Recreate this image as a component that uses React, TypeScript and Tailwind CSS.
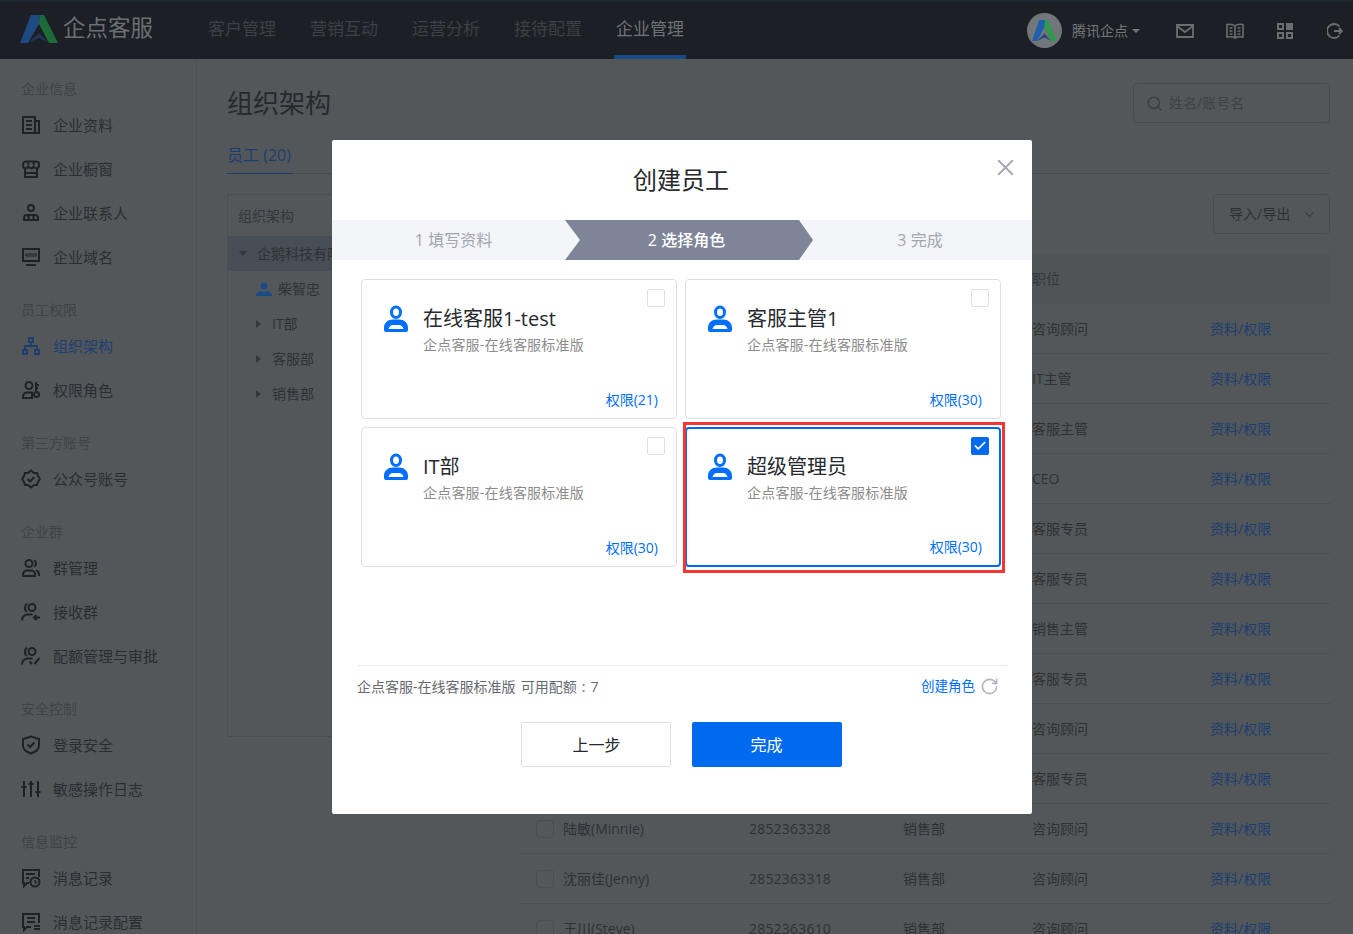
import { ReactNode } from "react";
import { Check, ChevronDown, RotateCw, Search, X } from "lucide-react";

const NAV = ["客户管理", "营销互动", "运营分析", "接待配置", "企业管理"];

function Glyph({ children, className = "" }: { children: ReactNode; className?: string }) {
  return (
    <svg viewBox="0 0 20 20" fill="none" stroke="currentColor" strokeWidth="2" className={`w-5 h-5 shrink-0 ${className}`}>
      {children}
    </svg>
  );
}

const ICONS: Record<string, ReactNode> = {
  doc: <><path d="M2 2h12v16H2zM14 6h4v12h-4" /><path d="M5 6h6M5 10h6M5 14h6" /></>,
  store: <><path d="M4 10v8h12v-8M2 5.500a3 3 0 0 1 3-3h10a3 3 0 0 1 3 3v1a2.500 2.500 0 0 1-5.300 0 2.500 2.500 0 0 1-5.400 0 2.500 2.500 0 0 1-5.300 0z" /><path d="M4 14h12M7.300 3v3M12.700 3v3" /></>,
  contact: <><circle cx="10" cy="5" r="3" /><path d="M3 17v-2a3 3 0 0 1 3-3h8a3 3 0 0 1 3 3v2z" /><path d="M7.500 12v5M12.500 12v5" /></>,
  domain: <><path d="M2 2h16v12H2zM5 18h10" /><path d="M5 7h10v2H5z" strokeWidth="1.200" /></>,
  org: <><path d="M8 2h4v4H8zM2 14h4v4H2zM14 14h4v4h-4zM10 6v4M4 14v-4h12v4" /></>,
  role: <><circle cx="8" cy="5.500" r="3.500" /><path d="M2 18v-1.500a4 4 0 0 1 4-4h5v5.500zM15 2v9M15 5h3M15 8h2" /><circle cx="15.500" cy="14.500" r="2.500" /></>,
  badge: <><path d="M10 1.500l3 2.500h3l1 3 2 3-2 3-1 3h-3l-3 2.500-3-2.500H4l-1-3-2-3 2-3 1-3h3z" /><path d="M6.500 10l2.500 2.500 4.500-4.500" /></>,
  group: <><circle cx="8" cy="5.500" r="3.500" /><path d="M2 18v-1.500a4 4 0 0 1 4-4h4a4 4 0 0 1 4 4V18zM13 2.300a3.500 3.500 0 0 1 0 6.400M15 12.500a4 4 0 0 1 3 4V18" /></>,
  receive: <><circle cx="11" cy="5.500" r="3.500" /><path d="M1 18.500c0-3 2-5.500 5.500-6h5M6 1.500C3 4 3.500 8.500 6 10M13 15.500h6M15.500 13L13 15.500l2.500 2.500" /></>,
  quota: <><circle cx="11" cy="5.500" r="3.500" /><path d="M1 18.500c0-3 2-5.500 5.500-6h5M6 1.500C3 4 3.500 8.500 6 10M8.500 15.500l2.500 2.500M13.500 18l5-6" /></>,
  shield: <><path d="M10 1.500l8 2.500v7c0 3.500-4 6-8 7.500-4-1.500-8-4-8-7.500V4z" /><path d="M6.500 9.500l2.500 2.500 4.500-4.500" /></>,
  sliders: <><path d="M3 2v16M10 2v16M17 2v16" /><path d="M0.500 8h5M7.500 5h5M14.500 13h5" /></>,
  history: <><path d="M8 15H6l-3 3v-3H2V2h16v7" /><path d="M5 6h9M5 10h3" /><circle cx="14" cy="14" r="4.500" /><path d="M14 12v2.500h2" strokeWidth="1.300" /></>,
  setting: <><path d="M10 15H6l-3 3v-3H2V2h16v9" /><path d="M6 6h8M6 10h8M13 14h6M13 17h6" /></>,
};

const MENU: { title: string; items: [string, string, boolean?][] }[] = [
  { title: "企业信息", items: [["doc", "企业资料"], ["store", "企业橱窗"], ["contact", "企业联系人"], ["domain", "企业域名"]] },
  { title: "员工权限", items: [["org", "组织架构", true], ["role", "权限角色"]] },
  { title: "第三方账号", items: [["badge", "公众号账号"]] },
  { title: "企业群", items: [["group", "群管理"], ["receive", "接收群"], ["quota", "配额管理与审批"]] },
  { title: "安全控制", items: [["shield", "登录安全"], ["sliders", "敏感操作日志"]] },
  { title: "信息监控", items: [["history", "消息记录"], ["setting", "消息记录配置"]] },
];

const ROWS: { name?: string; account?: string; dept?: string; job: string }[] = [
  { job: "咨询顾问" },
  { job: "IT主管" },
  { job: "客服主管" },
  { job: "CEO" },
  { job: "客服专员" },
  { job: "客服专员" },
  { job: "销售主管" },
  { job: "客服专员" },
  { job: "咨询顾问" },
  { job: "客服专员" },
  { name: "陆敏(Minnie)", account: "2852363328", dept: "销售部", job: "咨询顾问" },
  { name: "沈丽佳(Jenny)", account: "2852363318", dept: "销售部", job: "咨询顾问" },
  { name: "王川(Steve)", account: "2852363610", dept: "销售部", job: "咨询顾问" },
];

const ROLES = [
  { name: "在线客服1-test", perm: "权限(21)" },
  { name: "客服主管1", perm: "权限(30)" },
  { name: "IT部", perm: "权限(30)" },
  { name: "超级管理员", perm: "权限(30)", selected: true },
];

function Logo({ className, dim }: { className: string; dim?: boolean }) {
  return (
    <svg viewBox="0 0 38 28" preserveAspectRatio="none" className={className}>
      <path d="M11 0h9l-1 9L8 28H0z" fill={dim ? "#1d4a80" : "#1f5fb0"} />
      <path d="M20 0h4l14 28h-9L19 9z" fill={dim ? "#1c6b38" : "#2f9a4c"} />
      <path d="M8 28l11-10 10 10-10-5z" fill={dim ? "#1f3558" : "#24457a"} />
    </svg>
  );
}

function Header() {
  return (
    <header className="h-[59px] shrink-0 flex items-center bg-[#1c1f25] border-t-2 border-[#1f2632]">
      <div className="w-[208px] shrink-0 flex items-center pl-5 gap-[5px]">
        <Logo dim className="w-[38px] h-7 -mt-1" />
        <span className="text-[22.500px] leading-none text-[#6c6f72] -mt-1">企点客服</span>
      </div>
      <nav className="flex gap-[34px] h-full">
        {NAV.map((n, i) => (
          <div
            key={n}
            className={`relative flex items-center text-[17px] pb-1 ${i === 4 ? "text-[#6f7377]" : "text-[#3d4046]"}`}
          >
            {n}
            {i === 4 && <span className="absolute -left-0.5 -right-0.5 bottom-0 h-1 bg-[#1a4a84]" />}
          </div>
        ))}
      </nav>
      <div className="ml-auto flex items-center pr-2.5 text-[#6b6e71]">
        <div className="w-[35px] h-[35px] rounded-full bg-[#707679] flex items-center justify-center">
          <Logo className="w-[25px] h-[21px]" />
        </div>
        <span className="ml-2.5 text-sm text-[#75787b]">腾讯企点</span>
        <span className="ml-1 w-0 h-0 border-x-4 border-x-transparent border-t-4 border-t-[#75787b]" />
        <svg viewBox="0 0 18 14" fill="none" stroke="currentColor" strokeWidth="1.800" className="ml-9 w-[18px] h-3.5">
          <path d="M1 1h16v12H1zM1 2l8 6 8-6" />
        </svg>
        <svg viewBox="0 0 18 16" fill="none" stroke="currentColor" strokeWidth="1.600" className="ml-8 w-[18px] h-4">
          <path d="M9 3C7 1 4 1 1 1.500V14c3-.5 6-.5 8 1 2-1.500 5-1.500 8-1V1.500C14 1 11 1 9 3zM9 3v12M3.500 5h3M3.500 8h3M3.500 11h3M11.500 5h3M11.500 8h3M11.500 11h3" />
        </svg>
        <div className="ml-[33px] grid grid-cols-2 gap-[2px]">
          <span className="w-[7px] h-[7px] border-2 border-current" />
          <span className="w-[7px] h-[7px] bg-current" />
          <span className="w-[7px] h-[7px] border-2 border-current" />
          <span className="w-[7px] h-[7px] border-2 border-current" />
        </div>
        <svg viewBox="0 0 16 16" fill="none" stroke="currentColor" strokeWidth="1.800" className="ml-[34px] w-4 h-4">
          <path d="M12.500 3.500A7 7 0 1 0 12.500 12.500M7 8h8M12 5l3 3-3 3" />
        </svg>
      </div>
    </header>
  );
}

function Sidebar() {
  return (
    <aside className="w-[197px] shrink-0 border-r border-[#4c5052] pl-[21px] pt-[21px]">
      {MENU.map((g) => (
        <div key={g.title} className="mb-[22px]">
          <div className="text-sm leading-[18px] text-[#3f4345]">{g.title}</div>
          <div className="mt-[5px]">
            {g.items.map(([icon, label, active]) => (
              <div key={label} className={`h-11 flex items-center gap-3 text-[15px] ${active ? "text-[#1d3f70]" : "text-[#2a2d30]"}`}>
                <Glyph className={active ? "" : "text-[#1f2225]"}>{ICONS[icon]}</Glyph>
                {label}
              </div>
            ))}
          </div>
        </div>
      ))}
    </aside>
  );
}

function OrgTree() {
  return (
    <div className="w-[280px] h-[543px] shrink-0 border border-[#4a4e50] text-sm text-[#2e3134]">
      <div className="h-[41px] flex items-center pl-[10px] text-[#33363a]">组织架构</div>
      <div className="h-[35px] flex items-center pl-[11px] bg-[#484e56] whitespace-nowrap">
        <span className="w-0 h-0 border-x-[4px] border-x-transparent border-t-[5px] border-t-[#33373b]" />
        <span className="ml-[10px]">企鹅科技有限公司</span>
      </div>
      <div className="h-[35px] flex items-center pl-[28px] gap-1.5">
        <svg viewBox="0 0 16 14" className="w-4 h-3.5 text-[#1a4a84]" fill="currentColor">
          <circle cx="8" cy="4" r="3.500" />
          <path d="M0 14c0-3 3-5 5.500-5L8 11l2.500-2c2.500 0 5.500 2 5.500 5z" />
        </svg>
        柴智忠
      </div>
      {["IT部", "客服部", "销售部"].map((d) => (
        <div key={d} className="h-[35px] flex items-center pl-7 gap-[11px]">
          <span className="w-0 h-0 border-y-4 border-y-transparent border-l-[5px] border-l-[#33373b]" />
          {d}
        </div>
      ))}
    </div>
  );
}

function Main() {
  return (
    <main className="flex-1 min-w-0 pl-[30px] pr-[23px]">
      <div className="h-[64px] flex items-end justify-between">
        <h1 className="text-[26px] leading-[38px] text-[#26292c] mb-px">组织架构</h1>
        <div className="w-[197px] h-10 border border-[#484c4e] rounded-sm flex items-center pl-3 gap-1.5 text-sm text-[#3e4245]">
          <Search size={17} className="text-[#393d40]" />
          姓名/账号名
        </div>
      </div>
      <div className="mt-4 h-[35px] border-b border-[#484c4e]">
        <div className="w-[66px] h-[35px] border-b border-[#1a3d6e] text-base text-[#1b3e70] leading-[32px]">员工 (20)</div>
      </div>
      <div className="mt-5 flex gap-[12px]">
        <OrgTree />
        <div className="flex-1 min-w-0">
          <div className="flex justify-end">
            <div className="w-[117px] h-10 border border-[#484c4e] rounded-sm flex items-center pl-[15px] gap-3 text-sm text-[#2c2f32]">
              导入/导出
              <ChevronDown size={15} className="text-[#3b3f42]" />
            </div>
          </div>
          <div className="mt-5 h-[50px] bg-[#505456] flex items-center text-sm text-[#33373a] pl-[513px]">职位</div>
          {ROWS.map((r, i) => (
            <div key={i} className="h-[50px] grid grid-cols-[44px_186px_154px_178px_1fr] items-center border-b border-[#4a4e50] text-sm text-[#2e3134] pl-[17px]">
              <span>{r.name && <span className="block w-[18px] h-[18px] border border-[#494d4f] rounded-sm" />}</span>
              <span className="-ml-[18px] pl-px whitespace-nowrap">{r.name}</span>
              <span className="-ml-[17px] tracking-[0.2px]">{r.account}</span>
              <span className="-ml-[17px]">{r.dept}</span>
              <span className="contents">
                <span className="absolute left-[1032px]">{r.job}</span>
                <span className="absolute left-[1210px] text-[#1b3e70]">资料/权限</span>
              </span>
            </div>
          ))}
        </div>
      </div>
    </main>
  );
}

function PersonIcon() {
  return (
    <svg viewBox="0 0 24 27" className="w-6 h-[27px] shrink-0" fill="none">
      <ellipse cx="12" cy="7.200" rx="4.500" ry="5.300" stroke="#006eff" strokeWidth="3" />
      <path fillRule="evenodd" clipRule="evenodd" d="M0 23c0-5.500 4-8.500 9-8.500h6c5 0 9 3 9 8.500v2a2 2 0 0 1-2 2H2a2 2 0 0 1-2-2zM4.500 24h15c-.5-2-2-4-4.500-4H9c-2.500 0-4 2-4.500 4z" fill="#006eff" />
    </svg>
  );
}

function RoleCard({ name, perm, selected }: { name: string; perm: string; selected?: boolean }) {
  return (
    <div className={`relative h-[140px] rounded-[4px] ${selected ? "border-2 border-[#006aee] pl-[21px] pt-6" : "border border-[#dcdfe8] pl-[22px] pt-[25px]"}`}>
      {selected && <span className="absolute -left-[4px] -right-[6px] -top-[7px] -bottom-[8px] border-[3px] border-[#f33535]" />}
      <div className="flex gap-[15px]">
        <PersonIcon />
        <div>
          <div className="text-[20px] leading-7 text-[#26292e]">{name}</div>
          <div className="mt-0.5 text-sm leading-5 text-[#8c8c8c] tracking-[0.2px]">企点客服-在线客服标准版</div>
        </div>
      </div>
      {selected ? (
        <span className="absolute right-[10px] top-[8px] w-[18px] h-[18px] rounded-[2px] bg-[#006aee] flex items-center justify-center">
          <Check size={14} strokeWidth={3} className="text-white" />
        </span>
      ) : (
        <span className="absolute right-[11px] top-[9px] w-[18px] h-[18px] rounded-[2px] border border-[#dcdfe6]" />
      )}
      <span className={`absolute bottom-2 text-sm text-[#006eff] ${selected ? "right-[17px]" : "right-[18px]"}`}>{perm}</span>
    </div>
  );
}

function Modal() {
  return (
    <div className="absolute left-[332px] top-[140px] w-[700px] h-[674px] bg-white rounded-[2px]">
      <X size={27} strokeWidth={1.600} className="absolute right-[13px] top-[14px] text-[#a3a7b2]" />
      <h2 className="h-20 flex items-center justify-center text-2xl text-[#26292e] pr-[2px]">创建员工</h2>
      <div className="h-10 flex bg-[#f4f5f9] text-base leading-10 text-center text-[#a3a6b1]">
        <div className="w-[233px] pl-[10px]">1 填写资料</div>
        <div className="w-[248px] pr-[5px] bg-[#7f8599] text-white font-medium [clip-path:polygon(0_0,234px_0,100%_50%,234px_100%,0_100%,15px_50%)]">2 选择角色</div>
        <div className="flex-1 pr-[5px]">3 完成</div>
      </div>
      <div className="mt-[19px] ml-[29px] mr-[31px] grid grid-cols-2 gap-2">
        {ROLES.map((r) => (
          <RoleCard key={r.name} {...r} />
        ))}
      </div>
      <div className="mt-[98px] mx-[25px] border-t border-[#e8eaee] h-[42px] flex items-center justify-between text-sm">
        <span className="text-[#666a70] [word-spacing:1.500px]">企点客服-在线客服标准版 可用配额 : 7</span>
        <span className="flex items-center gap-[5px] text-[13.500px] text-[#006eff] pr-[8px]">
          创建角色
          <RotateCw size={19} strokeWidth={2} className="text-[#b1b4bd]" />
        </span>
      </div>
      <div className="mt-[15px] pr-[2px] flex justify-center gap-[21px] text-base">
        <button className="w-[150px] h-[45px] pl-0.5 border border-[#dcdfe8] rounded-[2px] text-[#26292e]">上一步</button>
        <button className="w-[150px] h-[45px] rounded-[2px] bg-[#006aee] text-white">完成</button>
      </div>
    </div>
  );
}

export default function App() {
  return (
    <div className="relative w-[1353px] h-[934px] overflow-hidden flex flex-col bg-[#53575a] font-['Open_Sans','Noto_Sans_CJK_SC',sans-serif]">
      <Header />
      <div className="flex flex-1 min-h-0">
        <Sidebar />
        <Main />
      </div>
      <Modal />
    </div>
  );
}
